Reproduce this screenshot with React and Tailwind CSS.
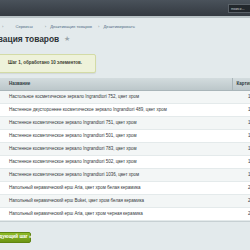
import React from 'react';

const rows = [
  ['Настольное косметическое зеркало Ingrandtori 752, цвет хром', '1'],
  ['Настенное двустороннее косметическое зеркало Ingrandtori 489, цвет хром', '1'],
  ['Настенное косметическое зеркало Ingrandtori 751, цвет хром', '1'],
  ['Настенное косметическое зеркало Ingrandtori 501, цвет хром', '1'],
  ['Настенное косметическое зеркало Ingrandtori 783, цвет хром', '1'],
  ['Настенное косметическое зеркало Ingrandtori 502, цвет хром', '1'],
  ['Настенное косметическое зеркало Ingrandtori 1036, цвет хром', '1'],
  ['Напольный керамический ерш Aria, цвет хром белая керамика', '2'],
  ['Напольный керамический ерш Buket, цвет хром белая керамика', '2'],
  ['Напольный керамический ерш Aria, цвет хром черная керамика', '2'],
];

export default function App() {
  return (
    <div className="w-[250px] h-[250px] overflow-hidden bg-[#e3eaec] font-['Liberation_Sans',Arial,sans-serif]">
      {/* top bar */}
      <div className="h-[16px] bg-gradient-to-b from-[#4a525b] to-[#343a41] flex items-center justify-end">
        <div className="h-[9px] w-[24px] bg-[#22272c] border border-[#5a6168] text-[4px] leading-[7px] text-[#c9ced3] pl-[2px] mr-[-2px]">
          поиск...
        </div>
      </div>
      <div className="h-[2px] bg-[#b9c3c6]" />

      {/* breadcrumb */}
      <div className="flex items-center gap-[4px] text-[4.2px] text-[#4f6d85] mt-[6px] ml-[2px] h-[6px]">
        <span className="text-[#7b8a94]">›</span>
        <span className="ml-[8px]">Сервисы</span>
        <span className="ml-[8px] text-[#7b8a94]">›</span>
        <span>Деактивация товаров</span>
        <span className="ml-[2px] text-[#7b8a94]">›</span>
        <span>Деактивировать</span>
      </div>

      {/* title */}
      <div className="flex items-center mt-[3px] ml-[-31px] h-[12px]">
        <span className="text-[8.4px] font-bold text-[#2d3236] whitespace-nowrap">Деактивация товаров</span>
        <span className="ml-[5px] text-[7px] text-[#9aa5ab]">★</span>
      </div>

      {/* message */}
      <div className="mt-[9px] ml-[-4px] w-[100px] h-[19px] bg-[#eef2da] border border-[#d3dba6] rounded-[2px] shadow-[0_1px_1px_rgba(0,0,0,0.08)] flex items-center pl-[11px]">
        <span className="text-[4.5px] font-bold text-[#3b4030] whitespace-nowrap">Шаг 1, обработано 10 элементов.</span>
      </div>

      {/* table */}
      <div className="mt-[5px] ml-[-2px] w-[260px] border-x border-b border-[#c7d0d3] bg-white">
        <div className="flex h-[13px] bg-gradient-to-b from-[#d3dcde] to-[#bcc7ca] border-b border-[#a9b5b9] text-[4.5px] font-bold text-[#2d3a40]">
          <div className="w-[234px] pl-[10px] flex items-center border-r border-[#a9b5b9]">Название</div>
          <div className="flex-1 pl-[4px] flex items-center">Картинка</div>
        </div>
        {rows.map((r, i) => (
          <div
            key={i}
            className={`flex h-[13px] items-center text-[4.5px] text-[#33383b] border-b border-[#e4eaeb] ${i % 2 === 0 ? 'bg-[#f3f6f6]' : 'bg-white'}`}
          >
            <div className="w-[234px] pl-[10px] whitespace-nowrap overflow-hidden">{r[0]}</div>
            <div className="flex-1 pl-[15px]">{r[1]}</div>
          </div>
        ))}
      </div>

      {/* button */}
      <div className="mt-[10px] ml-[-9px] w-[40px] h-[11px] rounded-[2px] bg-gradient-to-b from-[#8dba27] to-[#6c9514] border border-[#5f8510] flex items-center justify-center">
        <span className="text-[4.6px] font-bold text-white whitespace-nowrap">Следующий шаг »</span>
      </div>
    </div>
  );
}
